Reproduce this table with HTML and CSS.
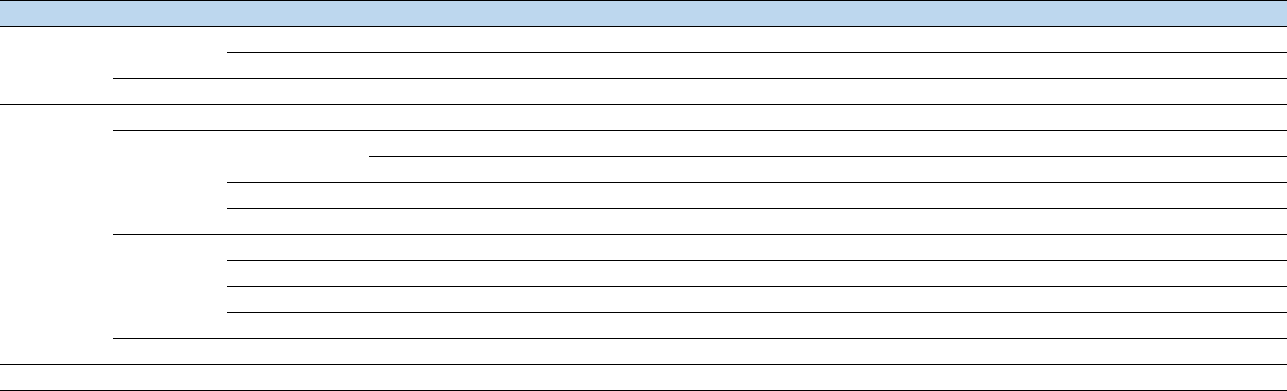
FILE: index.html
```html
<!DOCTYPE html>
<html>
<head>
<meta charset="utf-8">
<link rel="stylesheet" href="styles.css">
</head>
<body>
<table class="grid">
  <colgroup>
    <col class="w1"><col class="w2"><col class="w3"><col class="w4">
  </colgroup>
  <thead>
    <tr><th></th><th></th><th></th><th></th></tr>
  </thead>
  <tbody>
    <tr><td rowspan="3"></td><td rowspan="2"></td><td></td><td></td></tr>
    <tr><td></td><td></td></tr>
    <tr><td></td><td></td><td></td></tr>
    <tr><td rowspan="10"></td><td></td><td></td><td></td></tr>
    <tr><td rowspan="4"></td><td rowspan="2"></td><td></td></tr>
    <tr><td></td></tr>
    <tr><td></td><td></td></tr>
    <tr><td></td><td></td></tr>
    <tr><td rowspan="4"></td><td></td><td></td></tr>
    <tr><td></td><td></td></tr>
    <tr><td></td><td></td></tr>
    <tr><td></td><td></td></tr>
    <tr><td></td><td></td><td></td></tr>
    <tr><td></td><td></td><td></td><td></td></tr>
  </tbody>
</table>
</body>
</html>
```
FILE: styles.css
```css
html, body {
  margin: 0;
  padding: 0;
  background: #ffffff;
  font-family: "Liberation Sans", Arial, sans-serif;
  font-size: 14px;
}
.grid {
  width: 100%;
  table-layout: fixed;
  border-collapse: separate;
  border-spacing: 0;
}
.w1 { width: 113px; }
.w2 { width: 114px; }
.w3 { width: 142px; }
.w4 { width: auto; }
.grid th,
.grid td {
  padding: 0;
  height: 25px;
  line-height: 25px;
  border-bottom: 1px solid #000;
}
.grid th {
  background: #bdd7ee;
  border-top: 1px solid #000;
  font-weight: normal;
}
```
